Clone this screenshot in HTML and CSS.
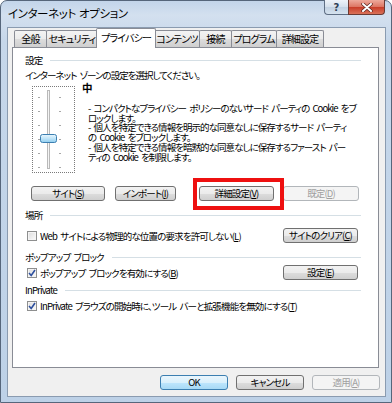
FILE: index.html
```html
<!DOCTYPE html>
<html lang="ja">
<head>
<meta charset="utf-8">
<title>インターネット オプション</title>
<link rel="stylesheet" href="styles.css">
</head>
<body>
<div class="window">
  <div class="titlebar">
    <span class="title">インターネット オプション</span>
    <div class="caption-btns">
      <div class="cbtn help">?</div>
      <div class="cbtn close">
        <svg width="14" height="9" viewBox="0 0 14 9"><path d="M3 1 L11 8 M11 1 L3 8" stroke="#5a2620" stroke-width="3.4" stroke-linecap="round"/><path d="M3 1 L11 8 M11 1 L3 8" stroke="#fff" stroke-width="2" stroke-linecap="round"/></svg>
      </div>
    </div>
  </div>
  <div class="client">
    <div class="tabs">
      <div class="tab w-zen">全般</div>
      <div class="tab w-sec">セキュリティ</div>
      <div class="tab active w-pri">プライバシー</div>
      <div class="tab w-con">コンテンツ</div>
      <div class="tab w-set">接続</div>
      <div class="tab w-pro">プログラム</div>
      <div class="tab w-adv">詳細設定</div>
    </div>
    <div class="page">
      <div class="group"><span>設定</span><i class="rule"></i></div>
      <div class="desc">インターネット ゾーンの設定を選択してください。</div>
      <div class="privacy">
        <div class="slider">
          <svg width="41" height="85" viewBox="0 0 41 85">
            <defs>
              <linearGradient id="thumb" x1="0" y1="0" x2="0" y2="1">
                <stop offset="0" stop-color="#eaf7fe"/>
                <stop offset="0.5" stop-color="#bfe4f8"/>
                <stop offset="1" stop-color="#8fcdef"/>
              </linearGradient>
            </defs>
            <rect x="14.5" y="3.5" width="2" height="78" fill="#f4f4f4" stroke="#b9b9b9"/>
            <g fill="#a8a8a8">
              <rect x="5" y="10" width="2" height="1"/><rect x="26" y="10" width="2" height="1"/>
              <rect x="5" y="24" width="2" height="1"/><rect x="26" y="24" width="2" height="1"/>
              <rect x="5" y="38" width="2" height="1"/><rect x="26" y="38" width="2" height="1"/>
              <rect x="5" y="52" width="2" height="1"/><rect x="26" y="52" width="2" height="1"/>
              <rect x="5" y="66" width="2" height="1"/><rect x="26" y="66" width="2" height="1"/>
              <rect x="5" y="80" width="2" height="1"/><rect x="26" y="80" width="2" height="1"/>
            </g>
            <rect x="7.5" y="47.5" width="16" height="8" rx="2" fill="url(#thumb)" stroke="#3c7fb1"/>
          </svg>
        </div>
        <div class="level">
          <div class="level-name">中</div>
          <div class="level-text">
            <p>- コンパクトなプライバシー ポリシーのないサード パーティの Cookie をブ<br>ロックします。</p>
            <p>- 個人を特定できる情報を明示的な同意なしに保存するサード パーティ<br>の Cookie をブロックします。</p>
            <p>- 個人を特定できる情報を暗黙的な同意なしに保存するファースト パー<br>ティの Cookie を制限します。</p>
          </div>
        </div>
      </div>
      <div class="btnrow">
        <button class="btn b-site">サイト(<u>S</u>)</button>
        <button class="btn b-imp">インポート(<u>I</u>)</button>
        <button class="btn b-adv">詳細設定(<u>V</u>)</button>
        <button class="btn b-def disabled">既定(<u>D</u>)</button>
      </div>
      <div class="group g-loc"><span>場所</span><i class="rule"></i></div>
      <div class="optrow r-loc">
        <label class="check"><span class="box"></span>Web サイトによる物理的な位置の要求を許可しない(<u>L</u>)</label>
        <button class="btn b-side">サイトのクリア(<u>C</u>)</button>
      </div>
      <div class="group g-pop"><span>ポップアップ ブロック</span><i class="rule"></i></div>
      <div class="optrow r-pop">
        <label class="check"><span class="box checked"><svg width="8" height="8" viewBox="0 0 8 8"><path d="M1 4 L3.2 6.5 L7 1" fill="none" stroke="#2d4f9e" stroke-width="1.6"/></svg></span>ポップアップ ブロックを有効にする(<u>B</u>)</label>
        <button class="btn b-side">設定(<u>E</u>)</button>
      </div>
      <div class="group g-inp"><span>InPrivate</span><i class="rule"></i></div>
      <div class="optrow r-inp">
        <label class="check"><span class="box checked"><svg width="8" height="8" viewBox="0 0 8 8"><path d="M1 4 L3.2 6.5 L7 1" fill="none" stroke="#2d4f9e" stroke-width="1.6"/></svg></span>InPrivate ブラウズの開始時に、ツール バーと拡張機能を無効にする(<u>T</u>)</label>
      </div>
      <div class="highlight"></div>
    </div>
    <div class="footer">
      <button class="btn fbtn default">OK</button>
      <button class="btn fbtn">キャンセル</button>
      <button class="btn fbtn disabled">適用(<u>A</u>)</button>
    </div>
  </div>
</div>
</body>
</html>
```

FILE: styles.css
```css
* { box-sizing: border-box; margin: 0; padding: 0; }
html, body { width: 392px; height: 403px; overflow: hidden; }
body {
  font-family: "Noto Sans CJK JP", "Noto Sans", sans-serif;
  font-size: 9.5px;
  letter-spacing: -0.85px;
  word-spacing: 2px;
  color: #000;
  font-feature-settings: "palt";
  background: #fff;
}
u { text-decoration: underline; text-underline-offset: 1px; }

.window {
  width: 392px;
  height: 403px;
  border: 1px solid #56667b;
  border-radius: 7px 7px 0 0;
  background: linear-gradient(to bottom, #c3d5ea 0, #d3e0ef 14px, #c6d7ea 40px, #bdd1e7 100%);
  display: flex;
  flex-direction: column;
  padding: 0 5px 5px 6px;
}

.titlebar {
  height: 26px;
  display: flex;
  align-items: flex-start;
}
.title {
  margin-left: 1px;
  margin-top: 5px;
  font-size: 11.5px;
  letter-spacing: -0.4px;
  word-spacing: 1px;
  line-height: 14px;
  color: #000;
}
.caption-btns {
  margin-left: auto;
  margin-right: 1px;
  margin-top: -1px;
  display: flex;
}
.cbtn {
  height: 15px;
  border: 1px solid #5f6f85;
  border-top: none;
  display: flex;
  align-items: center;
  justify-content: center;
}
.help {
  width: 24px;
  border-radius: 0 0 0 4px;
  border-right: none;
  background: linear-gradient(to bottom, #eef3f9, #d5e0ec 50%, #c2d1e2 51%, #d5e2ef);
  color: #2e3f55;
  font-family: "DejaVu Sans", sans-serif;
  font-size: 10px;
  letter-spacing: 0;
  font-weight: bold;
  line-height: 13px;
}
.close {
  width: 37px;
  border-radius: 0 0 4px 0;
  border-color: #6b3a33;
  background: linear-gradient(to bottom, #eeaa9c, #dc7461 50%, #c83c27 51%, #d9725a);
}

.client {
  flex: 1;
  background: #f0f0f0;
  border: 1px solid #8a9bb0;
  display: flex;
  flex-direction: column;
}

.tabs {
  height: 19px;
  display: flex;
  align-items: flex-end;
  padding-left: 6px;
}
.tab {
  height: 17px;
  border: 1px solid #898c95;
  border-bottom: none;
  border-radius: 2px 2px 0 0;
  background: linear-gradient(to bottom, #f3f3f3, #ebebeb 50%, #dddddd 51%, #cfcfcf);
  text-align: center;
  line-height: 15px;
  font-size: 10px;
  margin-left: -1px;
  white-space: nowrap;
}
.tab:first-child { margin-left: 0; }
.tab.active {
  height: 20px;
  margin-bottom: -1px;
  background: #fff;
  margin-left: -2px;
  margin-right: -1px;
  position: relative;
  z-index: 2;
  line-height: 17px;
}
.w-zen { width: 33px; }
.w-sec { width: 52px; }
.w-pri { width: 60px; }
.w-con { width: 46px; }
.w-set { width: 33px; }
.w-pro { width: 46px; }
.w-adv { width: 48px; }

.page {
  position: relative;
  margin-left: 4px;
  width: 367px;
  height: 321px;
  background: #fff;
  border: 1px solid #898c95;
  padding: 6px 17px 0 12px;
  display: flex;
  flex-direction: column;
}

.group {
  height: 12px;
  display: flex;
  align-items: center;
  line-height: 12px;
  white-space: nowrap;
}
.group .rule {
  flex: 1;
  border-top: 1px solid #d5dfe5;
  margin-left: 8px;
}
.desc {
  margin-top: 3px;
  height: 12px;
  line-height: 12px;
  white-space: nowrap;
  letter-spacing: -1px;
}

.privacy {
  margin-top: 1px;
  height: 91px;
  display: flex;
}
.slider {
  margin-left: 7px;
  margin-top: 4px;
  width: 43px;
  height: 87px;
  border: 1px dotted #7a7a7a;
}
.slider svg { display: block; }
.level {
  margin-left: 7px;
}
.level-name {
  font-weight: bold;
  height: 12px;
  line-height: 12px;
  font-size: 10.5px;
}
.level-text {
  margin-top: 10px;
  margin-left: 6px;
  white-space: nowrap;
  line-height: 9.7px;
  letter-spacing: -0.95px;
}

.btnrow {
  margin-top: 13px;
  display: flex;
  height: 15px;
}
.btn {
  font-family: inherit;
  font-size: 9.5px;
  letter-spacing: -0.85px;
  word-spacing: 2px;
  font-feature-settings: "palt";
  white-space: nowrap;
  height: 15px;
  line-height: 13px;
  border: 1px solid #707070;
  border-radius: 3px;
  background: linear-gradient(to bottom, #f2f2f2, #ebebeb 50%, #dddddd 51%, #cfcfcf);
  color: #000;
  text-align: center;
  padding: 0;
}
.btn.disabled {
  border-color: #b2b6ba;
  background: #f4f4f4;
  color: #a0a0a0;
}
.btn.default {
  border-color: #3c7fb1;
  background: linear-gradient(to bottom, #eaf6fd, #d9f0fc 50%, #bee6fd 51%, #a7d9f5);
}
.b-site { margin-left: 6px; width: 74px; }
.b-imp { margin-left: 10px; width: 61px; }
.b-adv { margin-left: 23px; width: 75px; }
.b-def { margin-left: 9px; width: 76px; }

.g-loc { margin-top: 8px; }
.optrow {
  display: flex;
  align-items: center;
  height: 15px;
}
.r-loc { margin-top: 7px; }
.g-pop { margin-top: 8px; }
.r-pop { margin-top: 2px; }
.g-inp { margin-top: 4px; }
.r-inp { margin-top: 2px; }
.b-side { margin-left: auto; margin-right: 3px; width: 75px; }

.check {
  display: flex;
  align-items: center;
  margin-left: 2px;
  white-space: nowrap;
}
.box {
  width: 10px;
  height: 10px;
  border: 1px solid #8e8f8f;
  background: linear-gradient(135deg, #dcdcdc, #fbfbfb);
  box-shadow: inset 0 0 0 1px #f4f4f4;
  margin-right: 3px;
  display: flex;
  align-items: center;
  justify-content: center;
}
.box svg { display: block; }

.highlight {
  position: absolute;
  left: 180px;
  top: 130px;
  width: 91px;
  height: 32px;
  border: 4px solid #ee1010;
}

.footer {
  margin-top: 7px;
  display: flex;
  justify-content: flex-end;
  gap: 8px;
  padding-right: 5px;
}
.fbtn { width: 68px; }
```
